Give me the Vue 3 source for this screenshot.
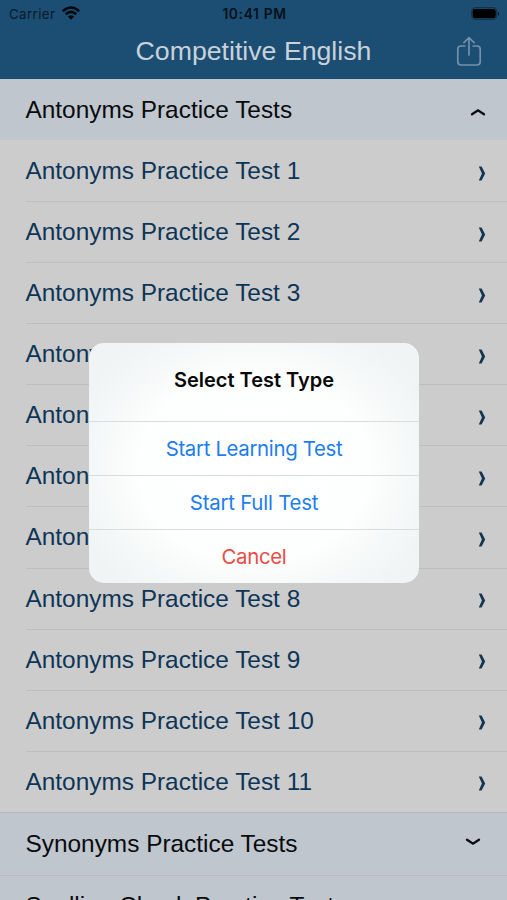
<script setup>
const tests = Array.from({ length: 11 }, (_, i) => `Antonyms Practice Test ${i + 1}`)
</script>

<template>
  <main class="screen">
    <header class="top">
      <div class="status">
        <div class="carrier">
          <span>Carrier</span>
          <svg class="wifi" viewBox="0 0 18 14">
            <path d="M0.8 5.2 Q9 -2.2 17.2 5.2 M3.7 8.3 Q9 3.5 14.3 8.3" />
            <path class="solid" d="M5.9 10.6 Q9 7.9 12.1 10.6 L9 13.8 Z" />
          </svg>
        </div>
        <span class="time">10:41 PM</span>
        <svg class="battery" viewBox="0 0 29 14">
          <rect class="shell" x="0.7" y="0.7" width="25" height="11.8" rx="3.8" />
          <rect x="1.7" y="1.9" width="23" height="9.4" rx="2.4" />
          <path d="M27 4.5 Q28.7 6.6 27 8.7 Z" />
        </svg>
      </div>
      <div class="nav">
        <h1>Competitive English</h1>
        <svg class="share" viewBox="0 0 26 32">
          <path d="M8.8 10 H5 Q1.8 10 1.8 13.2 V25.8 Q1.8 29 5 29 H21 Q24.2 29 24.2 25.8 V13.2 Q24.2 10 21 10 H17.2 M13 19 V1.8 M7.9 6.7 L13 1.6 L18.1 6.7" />
        </svg>
      </div>
    </header>

    <section class="heading first">
      <span class="label">Antonyms Practice Tests</span>
      <svg class="arrow up" viewBox="0 0 16 8"><path d="M2 6.3 L8 2.3 L14 6.3" /></svg>
    </section>
    <ul class="tests">
      <li v-for="test in tests" :key="test">
        <span class="label">{{ test }}</span>
        <svg class="chevron" viewBox="0 0 8 15"><path d="M0.8 0.6 H3.6 L7.2 7.5 L3.6 14.4 H0.8 L3.9 7.5 Z" /></svg>
      </li>
    </ul>
    <section class="heading second">
      <span class="label">Synonyms Practice Tests</span>
      <svg class="arrow down" viewBox="0 0 16 8"><path d="M2 1.7 L8 5.7 L14 1.7" /></svg>
    </section>
    <section class="heading third"><span class="label">Spelling Check Practice Tests</span></section>

    <div class="dialog" role="dialog">
      <h2><span>Select Test Type</span></h2>
      <button class="learn"><span>Start Learning Test</span></button>
      <button class="full"><span>Start Full Test</span></button>
      <button class="cancel"><span>Cancel</span></button>
    </div>
  </main>
</template>

<style>
body { margin: 0; overflow: hidden; }
</style>

<style scoped>
* { box-sizing: border-box; }
.screen {
  position: relative;
  width: 507px;
  height: 900px;
  overflow: hidden;
  background: #cccccc;
  font-family: "Liberation Sans", Arial, sans-serif;
}
svg { display: block; flex: none; }
.top { height: 79px; background: #1c4d73; }
.status {
  display: grid;
  grid-template-columns: 1fr auto 1fr;
  align-items: center;
  height: 27px;
  padding: 0 7px 0 9px;
  font: 13.3px Inter, sans-serif;
  color: #0a1b29;
}
.carrier { display: flex; align-items: center; gap: 6.5px; letter-spacing: 0.4px; }
.wifi { width: 18px; height: 14px; margin-top: -1px; fill: none; stroke: #03080d; stroke-width: 2.5; }
.wifi .solid { fill: #03080d; stroke: none; }
.time { font-size: 13.8px; font-weight: 600; letter-spacing: 0.65px; color: #06111b; }
.battery { width: 29px; height: 14px; justify-self: end; fill: #000; }
.battery .shell { fill: none; stroke: #12334c; stroke-width: 1.2; }
.nav {
  display: grid;
  grid-template-columns: 1fr auto 1fr;
  align-items: center;
  height: 48px;
  padding-right: 25px;
  padding-left: 25px;
}
.nav h1 {
  grid-column: 2;
  margin: 0;
  font-size: 26.7px;
  font-weight: 400;
  line-height: 30px;
  color: #c9d2da;
}
.share {
  justify-self: end;
  width: 26px;
  height: 32px;
  margin-top: 2px;
  fill: none;
  stroke: #7391aa;
  stroke-width: 1.7;
  stroke-linecap: round;
}
.heading {
  display: flex;
  justify-content: space-between;
  align-items: flex-start;
  padding-left: 25.5px;
  background: #c0c6cd;
  color: #080b0e;
}
.label { font-size: 24.4px; line-height: 28px; white-space: nowrap; }
.first { height: 61px; padding-top: 17px; padding-right: 21px; }
.second { height: 63px; padding-top: 17px; padding-right: 26px; border-top: 1px solid #b2babf; }
.third { height: 60px; padding-top: 16px; border-top: 1px solid #b5bbc1; }
.arrow { width: 16px; height: 8px; fill: none; stroke: #080b0e; stroke-width: 2.3; stroke-linecap: round; }
.up { margin-top: 12px; }
.down { margin-top: 8px; }
.tests { height: 672px; margin: 0; padding: 0 0 0 25.5px; list-style: none; }
.tests li {
  display: flex;
  justify-content: space-between;
  align-items: flex-start;
  height: 61.08px;
  padding: 16px 21px 0 0;
  border-top: 1px solid #bebebf;
  color: #0d3557;
}
.tests li:first-child { border-top-color: transparent; }
.chevron { width: 8px; height: 15px; margin-top: 8.5px; fill: #123552; }
.dialog {
  position: absolute;
  top: 342.5px;
  left: 89px;
  display: grid;
  grid-template-rows: 78px 54px 54px 54.5px;
  width: 330px;
  height: 240.5px;
  overflow: hidden;
  border-radius: 15px;
  background: radial-gradient(ellipse 58% 65% at 50% 52%, #ffffff 0%, #fdfefe 60%, #f0f4f4 100%);
}
.dialog h2, .dialog button {
  display: flex;
  justify-content: center;
  align-items: center;
  margin: 0;
  padding: 0;
  border: 0;
  background: none;
  font: 400 20.4px/26px Inter, sans-serif;
}
.dialog h2 { padding-bottom: 4px; font-weight: 600; font-size: 20px; color: #080808; }
.dialog button { padding-top: 1px; border-top: 1px solid #d9dddd; color: #1c7df0; letter-spacing: -0.33px; }
.dialog .full { letter-spacing: -0.22px; }
.dialog .cancel { padding-top: 1.5px; color: #ec4b43; }
</style>
